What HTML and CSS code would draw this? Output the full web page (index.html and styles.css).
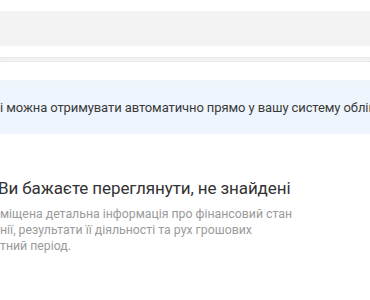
FILE: index.html
```html
<!DOCTYPE html>
<html>
  <head>
  <meta charset="utf-8">
  <title>Звітність</title>
  <link rel="stylesheet" href="styles.css">
  </head>
  <body>

<div class="topbar"></div>
<div class="divider"></div>

<div class="notice">
  <p>і можна отримувати автоматично прямо у вашу систему обліку</p>
</div>

<div class="empty">
  <h2>Ви бажаєте переглянути, не знайдені</h2>
  <p>міщена детальна інформація про фінансовий стан<br>
  нії, результати її діяльності та рух грошових<br>
  тний період.</p>
</div>

  </body>
</html>
```

FILE: styles.css
```css
html, body {margin:0; padding:0; background:#fff; overflow:hidden;}
body {font: 14px Roboto, Arial, sans-serif; color:#333; width:370px; height:300px;}
.topbar {margin-top:11px; height:35px; background:#f3f3f3;}
.divider {margin-top:11px; height:4px; background:linear-gradient(#ebebeb, #f6f6f6); border-bottom:1px dotted #e4e4e4;}
.notice {margin-top:18px; height:53px; background:#eef5fd; border-top:1px solid #f3f6f9; display:flex; align-items:center; white-space:nowrap; overflow:hidden;}
.notice p {margin:0; font-size:13px; letter-spacing:-0.1px; color:#3a3a3a;}
.empty {padding-top:43px; white-space:nowrap;}
.empty h2 {margin:0 0 0 -2px; font-size:17px; letter-spacing:-0.1px; font-weight:400; color:#333; line-height:22px;}
.empty p {margin:7px 0 0 0; font-size:12.3px; line-height:16px; color:#9a9a9a;}
```
